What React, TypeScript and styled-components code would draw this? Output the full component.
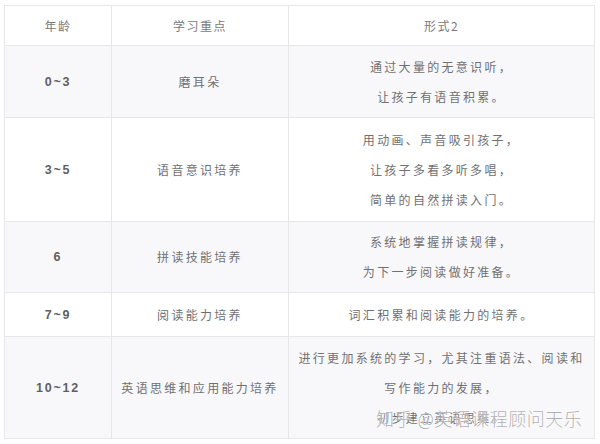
import React from "react";
import styled, { createGlobalStyle } from "styled-components";

const GlobalStyle = createGlobalStyle`
  html, body {
    margin: 0;
    padding: 0;
    background: #ffffff;
  }
  body {
    font-family: "Noto Sans CJK SC", "Noto Sans", sans-serif;
  }
`;

const Page = styled.div`
  width: 600px;
  height: 444px;
  padding: 5px 0 0 4px;
  box-sizing: border-box;
  background: #ffffff;
`;

const Table = styled.div`
  width: 591px;
  display: flex;
  flex-direction: column;
  gap: 1px;
  padding: 1px;
  box-sizing: border-box;
  background: #e7e7ea;
`;

const Row = styled.div<{ $height: number; $shade?: boolean }>`
  display: grid;
  grid-template-columns: 106px 176px 305px;
  column-gap: 1px;
  height: ${(p) => p.$height}px;
  & > * {
    background: ${(p) => (p.$shade ? "#f8f8fa" : "#ffffff")};
  }
`;

const Cell = styled.div`
  position: relative;
  display: flex;
  flex-direction: column;
  align-items: center;
  justify-content: center;
  text-align: center;
  color: #707072;
  font-size: 12px;
  letter-spacing: 2.3px;
  line-height: 30px;
`;

const HeadCell = styled(Cell)`
  color: #7a7a7c;
  letter-spacing: 1.5px;
`;

const AgeCell = styled(Cell)`
  font-family: "Liberation Sans", "Noto Sans", sans-serif;
  font-weight: 700;
  font-size: 12.5px;
  color: #5f5f62;
  letter-spacing: 1.8px;
`;

const Line = styled.div`
  white-space: nowrap;
`;

const Watermark = styled.div`
  position: absolute;
  left: 87px;
  top: 70px;
  font-size: 18px;
  line-height: 22px;
  letter-spacing: 0.5px;
  color: rgba(140, 140, 144, 0.7);
  text-shadow: 0 0 1px #ffffff, 0 0 2px #ffffff;
  white-space: nowrap;
  font-weight: 300;
`;

type RowData = {
  age: string;
  focus: string;
  form: string[];
  height: number;
  watermark?: boolean;
};

const rows: RowData[] = [
  { age: "0~3", focus: "磨耳朵", form: ["通过大量的无意识听，", "让孩子有语音积累。"], height: 71 },
  {
    age: "3~5",
    focus: "语音意识培养",
    form: ["用动画、声音吸引孩子，", "让孩子多看多听多唱，", "简单的自然拼读入门。"],
    height: 103,
  },
  { age: "6", focus: "拼读技能培养", form: ["系统地掌握拼读规律，", "为下一步阅读做好准备。"], height: 70 },
  { age: "7~9", focus: "阅读能力培养", form: ["词汇积累和阅读能力的培养。"], height: 43 },
  {
    age: "10~12",
    focus: "英语思维和应用能力培养",
    form: ["进行更加系统的学习，尤其注重语法、阅读和", "写作能力的发展，", "初步建立英语思维。"],
    height: 101,
    watermark: true,
  },
];

export default function App() {
  return (
    <Page>
      <GlobalStyle />
      <Table>
        <Row $height={39}>
          <HeadCell>年龄</HeadCell>
          <HeadCell>学习重点</HeadCell>
          <HeadCell>形式2</HeadCell>
        </Row>
        {rows.map((r, i) => (
          <Row key={r.age} $height={r.height} $shade={i % 2 === 0}>
            <AgeCell>{r.age}</AgeCell>
            <Cell>{r.focus}</Cell>
            <Cell>
              {r.form.map((l) => (
                <Line key={l}>{l}</Line>
              ))}
              {r.watermark && <Watermark>知乎 @英语课程顾问天乐</Watermark>}
            </Cell>
          </Row>
        ))}
      </Table>
    </Page>
  );
}
